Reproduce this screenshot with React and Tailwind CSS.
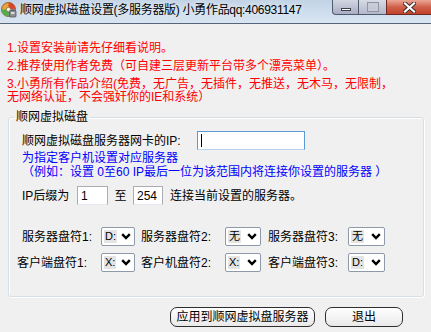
import React from "react";

function AppIcon() {
  return (
    <svg width="16" height="16" viewBox="0 0 16 16">
      <circle cx="7.5" cy="7.5" r="7" fill="#e8a33c" stroke="#8a4a1a" strokeWidth="0.8" />
      <path d="M7.5 7.5 L7.5 0.5 A7 7 0 0 1 14.5 7.5 Z" fill="#d9452b" />
      <path d="M7.5 7.5 L14.5 7.5 A7 7 0 0 1 7.5 14.5 Z" fill="#3f7fd0" />
      <path d="M7.5 7.5 L7.5 14.5 A7 7 0 0 1 0.5 7.5 Z" fill="#4fae4a" />
      <circle cx="7.5" cy="7.5" r="2.2" fill="#f6f0dc" stroke="#6b5a3a" strokeWidth="0.6" />
      <rect x="8.5" y="8.5" width="6.5" height="6.5" rx="1" fill="#8d8f94" stroke="#4a4c50" strokeWidth="0.7" />
      <rect x="10" y="10" width="3.5" height="2" fill="#d8dade" />
    </svg>
  );
}

function TitleBar() {
  return (
    <div className="flex h-[24px] items-start border-b border-[#56667a] bg-gradient-to-b from-[#c2d3e6] via-[#cddcec] to-[#d9e5f1]">
      <div className="ml-[1px] mt-[2px]">
        <AppIcon />
      </div>
      <span className="ml-[3px] mt-[3px] text-[12px] leading-[15px] tracking-[-0.3px] text-black [text-shadow:0_0_6px_#ffffff]">
        顺网虚拟磁盘设置(多服务器版) 小勇作品qq:406931147
      </span>

      <div className="ml-auto flex h-[15px]">
        <div className="flex w-[27px] items-end justify-center rounded-bl-[4px] border border-t-0 border-[#4f5a6c] bg-gradient-to-b from-[#d3d6e2] to-[#a8adc2] pb-[3px]">
          <div className="h-[3px] w-[10px] border border-[#3a3f4c] bg-white" />
        </div>
        <div className="flex w-[27px] items-center justify-center border-b border-[#4f5a6c] bg-gradient-to-b from-[#d8dae4] to-[#b3b7c9]">
          <div className="h-[8px] w-[10px] border-[2px] border-[#c8cad6] outline outline-1 outline-[#8f94a6]" />
        </div>
        <div className="flex w-[45px] items-center justify-center border-b border-l border-[#6e2a22] bg-gradient-to-b from-[#e9a797] via-[#d0604a] to-[#c2412c]">
          <svg width="13" height="11" viewBox="0 0 13 11">
            <path d="M2 1.5 L11 9.5 M11 1.5 L2 9.5" stroke="#3a2a28" strokeWidth="4" strokeLinecap="square" />
            <path d="M2 1.5 L11 9.5 M11 1.5 L2 9.5" stroke="#ffffff" strokeWidth="2.2" strokeLinecap="square" />
          </svg>
        </div>
      </div>
    </div>
  );
}

function TextBox({ value, width, focused }) {
  return (
    <div
      className={
        "flex h-[19px] items-center bg-white px-[3px] text-[12px] leading-[14px] " +
        width +
        (focused
          ? " border border-[#5b9bd5] border-b-[#b7d4ee]"
          : " border border-[#abadb3] border-b-[#e3e9ef]")
      }
    >
      {focused && <div className="h-[13px] w-[1px] bg-black" />}
      {value}
    </div>
  );
}

function Combo({ value, width }) {
  return (
    <div
      className={
        "flex h-[19px] items-center rounded-[2px] border border-[#8e9aa9] bg-white pl-[2px] pr-[3px] " +
        width
      }
    >
      <span className="bg-[#e4e4e4] px-[1px] text-[11px] leading-[13px]">
        {value}
      </span>
      <svg className="ml-auto" width="10" height="7" viewBox="0 0 10 7">
        <polyline points="1.2,1.2 5,5 8.8,1.2" fill="none" stroke="#000" strokeWidth="2.4" />
      </svg>
    </div>
  );
}

export default function App() {
  return (
    <div className="h-[332px] w-[431px] overflow-hidden bg-[#f0f0f0] font-['Liberation_Sans','Noto_Sans_CJK_SC',sans-serif] text-[12px] text-black">
      <TitleBar />

      {/* notes */}
      <div className="pl-[7px] pt-[18px] leading-[13px] text-[#ff0000]">
        <p>1.设置安装前请先仔细看说明。</p>
        <p className="mt-[5px]">2.推荐使用作者免费（可自建三层更新平台带多个漂亮菜单）。</p>
        <p className="mt-[5px]">3.小勇所有作品介绍(免费，无广告，无插件，无推送，无木马，无限制，</p>
        <p>无网络认证，不会强奸你的IE和系统）</p>
      </div>

      {/* group box */}
      <fieldset className="ml-[8px] mr-[7px] mt-[6px] rounded-[3px] border border-[#d5dfe5] pb-[24px] shadow-[inset_1px_1px_0_#ffffff,1px_1px_0_#ffffff]">
        <legend className="ml-[5px] px-[2px] leading-[14px]">顺网虚拟磁盘</legend>

        <div className="mt-[7px] flex h-[19px] items-center pl-[13px]">
          <span className="w-[175px] leading-[14px]">顺网虚拟磁盘服务器网卡的IP:</span>
          <TextBox width="w-[108px]" focused />
        </div>

        <div className="mt-[1px] pl-[13px] leading-[14px] text-[#0000ff]">
          <p>为指定客户机设置对应服务器</p>
          <p>（例如：设置 0至60 IP最后一位为该范围内将连接你设置的服务器 ）</p>
        </div>

        <div className="mt-[7px] flex h-[19px] items-center pl-[13px]">
          <span className="w-[55px] leading-[14px]">IP后缀为</span>
          <TextBox value="1" width="w-[31px]" />
          <span className="w-[25px] text-center leading-[14px]">至</span>
          <TextBox value="254" width="w-[30px]" />
          <span className="ml-[7px] leading-[14px]">连接当前设置的服务器。</span>
        </div>

        <div className="mt-[22px] flex h-[19px] items-center pl-[13px]">
          <span className="w-[79px] leading-[14px]">服务器盘符1:</span>
          <Combo value="D:" width="w-[34px]" />
          <span className="ml-[6px] w-[84px] leading-[14px]">服务器盘符2:</span>
          <Combo value="无" width="w-[36px]" />
          <span className="ml-[7px] w-[80px] leading-[14px]">服务器盘符3:</span>
          <Combo value="无" width="w-[37px]" />
        </div>

        <div className="mt-[7px] flex h-[19px] items-center pl-[8px]">
          <span className="w-[84px] leading-[14px]">客户端盘符1:</span>
          <Combo value="X:" width="w-[34px]" />
          <span className="ml-[6px] w-[84px] leading-[14px]">客户机盘符2:</span>
          <Combo value="X:" width="w-[36px]" />
          <span className="ml-[7px] w-[80px] leading-[14px]">客户端盘符3:</span>
          <Combo value="D:" width="w-[37px]" />
        </div>
      </fieldset>

      {/* buttons */}
      <div className="mt-[10px] flex justify-end gap-[10px] pr-[28px]">
        <button className="h-[20px] w-[145px] rounded-[7px] border-[1.5px] border-[#2e2e2e] bg-gradient-to-b from-[#ffffff] to-[#e9e9e9] text-[12px] leading-[14px]">
          应用到顺网虚拟盘服务器
        </button>
        <button className="h-[20px] w-[78px] rounded-[7px] border-[1.5px] border-[#2e2e2e] bg-gradient-to-b from-[#ffffff] to-[#e9e9e9] text-[12px] leading-[14px]">
          退出
        </button>
      </div>
    </div>
  );
}
